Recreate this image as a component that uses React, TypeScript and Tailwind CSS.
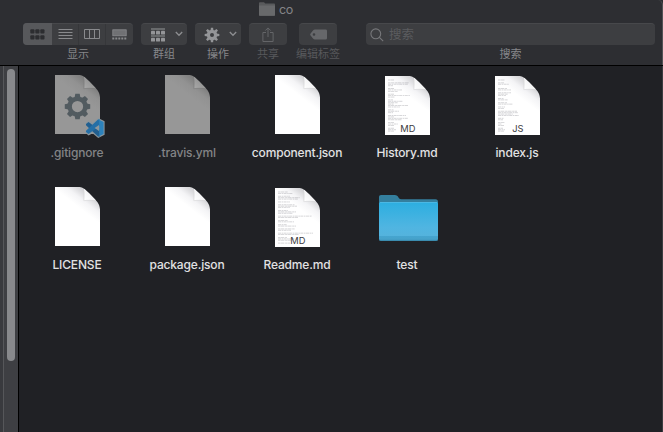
import type { ReactNode } from "react";

type Preview = { tag: string; widths: number[] };
type FileItem = {
  name: string;
  kind: "page" | "folder" | "config";
  dim?: boolean;
  preview?: Preview;
};

const historyLines = [6, 0, 21, 20, 5, 0, 6, 14, 10, 0, 6, 22, 7, 0, 5, 15, 10, 6, 20, 12, 0, 6, 11, 5, 0, 18, 6, 20, 14, 0, 6, 10, 6, 0, 6, 8, 6];
const scriptLines = [7, 0, 6, 11, 0, 0, 9, 13, 0, 13, 10, 8, 0, 6, 10, 0, 9, 15, 0, 7, 6, 0, 19, 20, 15, 21, 0, 6, 5, 0, 7, 4, 6, 0, 5, 7, 6];
const readmeLines = [10, 15, 0, 12, 22, 20, 0, 12, 0, 17, 19, 12, 0, 10, 18, 15, 0, 34, 20, 0, 10, 16, 0, 9, 18, 0, 17, 13, 0, 35, 21, 0, 9, 17, 13, 0, 12];

const files: FileItem[] = [
  { name: ".gitignore", kind: "config", dim: true },
  { name: ".travis.yml", kind: "page", dim: true },
  { name: "component.json", kind: "page" },
  { name: "History.md", kind: "page", preview: { tag: "MD", widths: historyLines } },
  { name: "index.js", kind: "page", preview: { tag: "JS", widths: scriptLines } },
  { name: "LICENSE", kind: "page" },
  { name: "package.json", kind: "page" },
  { name: "Readme.md", kind: "page", preview: { tag: "MD", widths: readmeLines } },
  { name: "test", kind: "folder" },
];

function Gear({ className, teeth, inner, outer, hole, half }: { className: string; teeth: number; inner: number; outer: number; hole: number; half: number }) {
  return (
    <svg className={className} viewBox="-12 -12 24 24" fill="currentColor">
      {Array.from({ length: teeth }, (_, i) => (
        <path
          key={i}
          transform={`rotate(${(i * 360) / teeth})`}
          d={`M${-half} ${-inner + 1}L${-half * 0.75} ${-outer}H${half * 0.75}L${half} ${-inner + 1}Z`}
        />
      ))}
      <circle r={(inner + hole) / 2} fill="none" stroke="currentColor" strokeWidth={inner - hole} />
    </svg>
  );
}

function PageIcon({ id, dim, preview }: { id: string; dim?: boolean; preview?: Preview }) {
  const light = dim ? "#979797" : "#ffffff";
  const shade = dim ? "#7e7e7e" : "#d3d3d6";
  return (
    <svg className="block h-[59px] w-[45px]" viewBox="0 0 45 59">
      <defs>
        <linearGradient id={`${id}-g`} x1="26" y1="22" x2="36" y2="9" gradientUnits="userSpaceOnUse">
          <stop offset="0" stopColor={light} />
          <stop offset="0.5" stopColor={dim ? "#929292" : "#f4f4f6"} />
          <stop offset="1" stopColor={shade} />
        </linearGradient>
        <linearGradient id={`${id}-f`} x1="29" y1="13" x2="35" y2="7" gradientUnits="userSpaceOnUse">
          <stop offset="0" stopColor={dim ? "#a8a8a8" : "#ffffff"} />
          <stop offset="1" stopColor={dim ? "#969696" : "#f4f4f5"} />
        </linearGradient>
      </defs>
      <path d="M0 0H24.5C28.5 0 31.5 3.8 36 8.2C41.5 13.4 45 17.2 45 22.5V59H0Z" fill={`url(#${id}-g)`} />
      {preview?.widths.map((w, i) =>
        w > 0 ? (
          <path
            key={i}
            d={`M3 ${4 + i * 1.42}h${w}`}
            stroke="#777780"
            strokeWidth="0.7"
            strokeDasharray={i % 2 ? "3 .6 1.5 .5" : "2 .4 4 .7"}
            opacity="0.42"
          />
        ) : null,
      )}
      <path d="M29 2C29.6 6 29.6 10.5 29.2 13.4C33.5 12.8 37.5 12.8 41 13.4L36 8.2C33.5 5.8 31 3.4 29 1.8Z" fill={`url(#${id}-f)`} />
      <path d="M28.8 4V13.7C33.5 13 37.5 13.1 40.8 13.9" fill="none" stroke={dim ? "#7e7e7e" : "#d6d6d9"} strokeWidth="0.6" />
      {preview && (
        <text x="22.8" y="56" textAnchor="middle" fontSize="9.3" fill="#3a3a3c" fontFamily="Inter, sans-serif">
          {preview.tag}
        </text>
      )}
    </svg>
  );
}

function CodeBadge() {
  return (
    <svg className="absolute left-[30px] top-[43px] h-[20px] w-[20px]" viewBox="0 0 20 20">
      <path d="M13.2 0L19.6 3.2V16.8L13.2 20L7.6 15.2L3.6 17.6L0 14.4L3.8 10L0 5.6L3.6 2.4L7.6 4.8Z" fill="#8d979d" />
      <path d="M1 5.9L3.5 3.9L15 12.4V18.5L13 18.6L1 7.2Z" fill="#215f90" />
      <path d="M1 14.1L3.5 16.1L15 7.6V1.5L13 1.4L1 12.8Z" fill="#256fa6" />
      <path d="M13 1.2L18.6 3.9V16.1L13 18.8L14.2 17V3Z" fill="#2d82bb" />
      <path d="M14 7V13L9.6 10Z" fill="#8d979d" />
    </svg>
  );
}

function FolderIcon() {
  return (
    <svg className="mt-[7px] block h-[49px] w-[60px]" viewBox="0 0 60 49">
      <defs>
        <linearGradient id="folder-front" x1="0" y1="0" x2="0" y2="1">
          <stop offset="0" stopColor="#2caee0" />
          <stop offset="0.65" stopColor="#50b5e1" />
          <stop offset="0.87" stopColor="#54b3dd" />
          <stop offset="0.88" stopColor="#45a5cf" />
          <stop offset="1" stopColor="#479fc6" />
        </linearGradient>
      </defs>
      <path d="M1 2.7Q1 1 3 1H16.5C19 1 19.5 1.9 20.8 3.9Q21.7 5.2 23.5 5.2H57.5Q60 5.2 60 7.7V12H1Z" fill="#347f9e" />
      <path d="M1 9.7Q1 8 2.7 8H58.3Q60 8 60 9.7V45Q60 47 58 47H3Q1 47 1 45Z" fill="url(#folder-front)" />
      <path d="M2 8.5H59" stroke="#58bce5" strokeWidth=".7" />
      <path d="M1.5 46.4H59.5" stroke="#347f9f" strokeWidth=".7" />
    </svg>
  );
}

function FileCell({ file, index }: { file: FileItem; index: number }) {
  return (
    <div className="flex h-28 flex-col items-center">
      <div className={file.preview ? "relative ml-[1px] mt-[10px] h-[60px]" : "relative ml-[1px] mt-[9px] h-[61px]"}>
        {file.kind === "folder" ? (
          <FolderIcon />
        ) : (
          <PageIcon id={`page-${index}`} dim={file.dim} preview={file.preview} />
        )}
        {file.kind === "config" && (
          <>
            <Gear className="absolute left-[9px] top-[18px] h-[27px] w-[27px] text-[#525b60]" teeth={8} inner={9} outer={11.3} hole={5} half={2.6} />
            <CodeBadge />
          </>
        )}
      </div>
      <span className={`mt-[9px] whitespace-nowrap text-[12px] font-medium leading-[16px] tracking-[-0.16px] ${file.dim ? "text-[#838486]" : "text-[#e2e2e3]"}`}>
        {file.name}
      </span>
    </div>
  );
}

function Tool({ label, width, dim, children }: { label: string; width: string; dim?: boolean; children: ReactNode }) {
  return (
    <div className={`flex flex-col items-center ${width}`}>
      <div className="flex h-[22px] w-full items-center rounded-[4px] border-t border-[#47484b] bg-[#3d3e41]">{children}</div>
      <span className={`mt-[1px] whitespace-nowrap text-[11px] leading-[16px] ${dim ? "text-[#58595c]" : "text-[#86878a]"}`}>{label}</span>
    </div>
  );
}

function Chevron() {
  return (
    <svg className="-mt-px h-[6px] w-[8px]" viewBox="0 0 8 6" fill="none" stroke="#8d8e91" strokeWidth="1.3">
      <path d="M.8 1L4 4.3L7.2 1" />
    </svg>
  );
}

function ViewModes() {
  return (
    <>
      <span className="-mt-px flex h-[22px] w-[29px] items-center justify-center rounded-l-[4px] bg-[#57585b]">
        <svg className="h-[11px] w-[15px]" viewBox="0 0 15 11" fill="#2c2d30">
          {[0, 5, 10].map((x) => [0.3, 6.3].map((y) => <rect key={`${x}-${y}`} x={x + 0.3} y={y} width="4.2" height="4.2" rx=".9" />))}
        </svg>
      </span>
      <span className="flex h-full w-[27px] items-center justify-center border-r border-[#36373a]">
        <svg className="h-[11px] w-[15px]" viewBox="0 0 15 11" stroke="#898a8d">
          <path d="M.5 .5H14.5M.5 3.5H14.5M.5 6.5H14.5M.5 9.5H14.5" />
        </svg>
      </span>
      <span className="flex h-full w-[27px] items-center justify-center border-r border-[#36373a]">
        <svg className="h-[11px] w-[16px]" viewBox="0 0 16 11" fill="none" stroke="#898a8d">
          <path d="M.5 .5H15.5V9.5H.5ZM5.5 .5V9.5M10.5 .5V9.5" />
        </svg>
      </span>
      <span className="flex h-full w-[27px] items-center justify-center">
        <svg className="h-[11px] w-[15px]" viewBox="0 0 15 11">
          <rect x=".8" y=".8" width="13.4" height="6" fill="#707174" stroke="#8b8c8f" strokeWidth=".8" />
          {[0.3, 3.3, 6.3, 9.3, 12.3].map((x) => <rect key={x} x={x} y="8.5" width="2" height="2" fill="#898a8d" />)}
        </svg>
      </span>
    </>
  );
}

export default function App() {
  return (
    <main className="flex h-[432px] w-[663px] flex-col overflow-hidden bg-[#202125] font-['Inter','Noto_Sans_CJK_SC',sans-serif]">
      <header className="flex h-[66px] shrink-0 flex-col border-b border-black bg-[#2d2e32]">
        <div className="min-h-0 flex-1 rounded-tr-[5px] border-r border-[#515255]">
          <div className="flex h-[23px] items-start pl-[259px] pt-[2px]">
            <svg className="h-[14px] w-[16px]" viewBox="0 0 16 14">
              <path d="M0 1Q0 .3 .8 .3H5L6.3 1.5H15.2Q16 1.5 16 2.3V13Q16 13.8 15.2 13.8H.8Q0 13.8 0 13Z" fill="#595a5c" />
              <path d="M0 3.5H16V13Q16 13.8 15.2 13.8H.8Q0 13.8 0 13Z" fill="#68696b" />
            </svg>
            <span className="ml-[4px] text-[12.5px] leading-[16px] tracking-[-0.3px] text-[#848588]">co</span>
          </div>
          <div className="flex pl-[23px]">
            <Tool label="显示" width="w-[110px]"><ViewModes /></Tool>
            <div className="w-2" />
            <Tool label="群组" width="w-[46px]">
              <svg className="ml-[10px] mr-[10px] h-[14px] w-[14px]" viewBox="0 0 14 14" fill="#949598">
                <path d="M0 .5H14V1.5H0ZM0 7.6H14V8.5H0Z" />
                {[0, 5, 10].map((x) => [2.8, 9.8].map((y) => <rect key={`${x}-${y}`} x={x} y={y} width="4" height="3.8" rx=".7" />))}
              </svg>
              <Chevron />
            </Tool>
            <div className="w-2" />
            <Tool label="操作" width="w-[46px]">
              <Gear className="ml-[9px] mr-[9px] h-[16px] w-[16px] text-[#949598]" teeth={8} inner={7.8} outer={11} hole={3} half={2.2} />
              <Chevron />
            </Tool>
            <div className="w-2" />
            <Tool label="共享" width="w-[38px]" dim>
              <svg className="mx-auto h-[16px] w-[12px]" viewBox="0 0 12 16" fill="none" stroke="#646568">
                <path d="M4 5.5H.9V14.5H11.1V5.5H8M6 10V1M3.3 3.6L6 .9L8.7 3.6" />
              </svg>
            </Tool>
            <div className="w-3" />
            <Tool label="编辑标签" width="w-[38px]" dim>
              <svg className="mx-auto h-[11px] w-[17px]" viewBox="0 0 17 11">
                <path fillRule="evenodd" fill="#66676a" d="M5 .4H15.5Q17 .4 17 1.8V9.2Q17 10.6 15.5 10.6H5Q3.8 10.6 3 9.6L.4 6.3Q-.1 5.5 .4 4.7L3 1.4Q3.8 .4 5 .4ZM4 4.2A1.3 1.3 0 1 0 4 6.8A1.3 1.3 0 1 0 4 4.2Z" />
              </svg>
            </Tool>
            <div className="w-[29px]" />
            <Tool label="搜索" width="w-[289px]">
              <svg className="ml-[4px] h-[14px] w-[14px]" viewBox="0 0 14 14" fill="none" stroke="#77787b" strokeWidth="1.1">
                <circle cx="5.8" cy="5.8" r="4.9" />
                <path d="M9.4 9.4L13.2 13.2" />
              </svg>
              <span className="ml-[5px] text-[12.5px] leading-[18px] text-[#5b5c5f]">搜索</span>
            </Tool>
          </div>
        </div>
      </header>
      <div className="flex min-h-0 flex-1 border-r border-[#3b3c40]">
        <aside className="flex w-[19px] shrink-0 border-r border-black bg-[#3e3f43]">
          <div className="w-[4px] border-r border-[#56575a] bg-[#393a3e]" />
          <div className="ml-[3px] mt-[3px] h-[292px] w-[8px] rounded-full bg-[#88898c]" />
        </aside>
        <section className="grid w-[553px] shrink-0 grid-cols-5 content-start pl-[3px]">
          {files.map((file, i) => <FileCell key={file.name} file={file} index={i} />)}
        </section>
      </div>
    </main>
  );
}
